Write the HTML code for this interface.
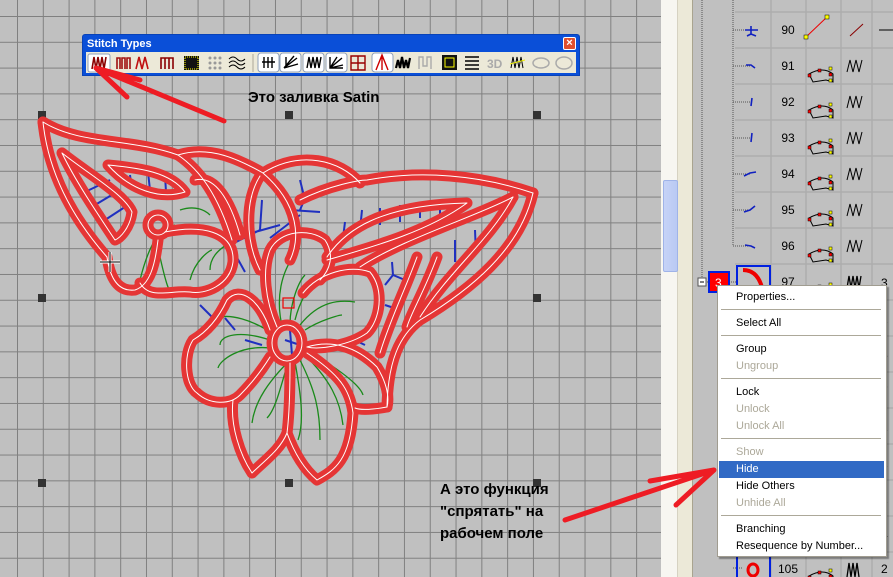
<!DOCTYPE html>
<html><head><meta charset="utf-8"><style>
body{margin:0;width:893px;height:577px;overflow:hidden;position:relative;font-family:"Liberation Sans",sans-serif;background:#c0c0c0}
#canvas{position:absolute;left:0;top:0;width:661px;height:577px;background-color:#c0c0c0;
background-image:linear-gradient(to right,#808080 0,#808080 1px,transparent 1px),linear-gradient(to bottom,#808080 0,#808080 1px,transparent 1px);
background-size:25.8px 25.8px;background-position:17px 16px}
#sb{position:absolute;left:661px;top:0;width:16px;height:577px;background:#f7f6f1}
#sb2{position:absolute;left:677px;top:0;width:16px;height:577px;background:#ece9d8;border-left:1px solid #d6d2c2;border-right:1px solid #a9a48f;box-sizing:border-box}
#thumb{position:absolute;left:663px;top:180px;width:13px;height:90px;background:linear-gradient(to right,#c6d3f7,#b9c9f3);border:1px solid #9fb3e8;border-radius:2px}
#panel{position:absolute;left:693px;top:0;width:200px;height:577px;background:#c0c0c0}
.num{position:absolute;font-size:12px;color:#000;width:34px;text-align:center}
#menu{position:absolute;left:717px;top:285px;width:168px;height:270px;background:#fff;border:1px solid #a09c90;box-shadow:2px 2px 1px rgba(0,0,0,.35);font-size:11px}
#menu div.i{position:absolute;left:1px;width:165px;height:17px;line-height:17px;padding-left:17px;box-sizing:border-box}
#menu .d{color:#aca899}
#menu .s{position:absolute;left:3px;width:160px;height:1px;background:#aca899}
#menu .h{background:#316ac5;color:#fff}
#tw{position:absolute;left:82px;top:34px;width:498px;height:42px;background:#0a4fd8;border:1px solid #0842b8;border-radius:3px 3px 0 0;box-sizing:border-box}
#tt{position:absolute;left:4px;top:3px;color:#fff;font-weight:bold;font-size:11px}
#tb{position:absolute;left:3px;top:17px;width:490px;height:21px;background:#ece9d8}
.note{position:absolute;font-weight:bold;font-size:15px;color:#000}
</style></head><body>
<div id="canvas"></div>

<svg width="661" height="577" style="position:absolute;left:0;top:0">
<g fill="#333"><rect x="38" y="111" width="8" height="8"/><rect x="285" y="111" width="8" height="8"/><rect x="533" y="111" width="8" height="8"/><rect x="38" y="294" width="8" height="8"/><rect x="533" y="294" width="8" height="8"/><rect x="38" y="479" width="8" height="8"/><rect x="285" y="479" width="8" height="8"/><rect x="533" y="479" width="8" height="8"/></g>
<g stroke="#2030c0" stroke-width="2" fill="none">
<path d="M85,192 L110,180 M95,205 L120,190 M105,220 L128,205"/>
<path d="M130,175 L132,190 M148,172 L150,190 M165,175 L166,192"/>
<path d="M230,245 L260,230 L262,200 M230,245 L245,272 M255,232 L280,225 M200,305 L215,320 M270,238 L300,215"/>
<path d="M300,210 L305,198 M290,210 L320,212 M305,200 L300,180"/>
<path d="M343,238 L345,222 M360,230 L362,210 M380,225 L380,208 M400,222 L400,205 M420,218 L420,205 M440,215 L440,205"/>
<path d="M385,285 L393,275 L412,283 M393,275 L392,262 M385,305 L400,310"/>
<path d="M455,240 L455,262 M475,230 L476,255 M285,340 L300,345 M290,330 L292,355 M245,340 L262,345 M225,318 L235,330 M350,338 L365,345"/>
</g>
<g stroke="#1a8a1a" stroke-width="1.3" fill="none">
<path d="M180,210 C195,205 205,210 210,215 M140,280 C150,240 160,230 175,225 M158,248 C165,280 170,300 175,292 M190,280 C195,260 210,250 212,250"/>
<path d="M235,240 C215,250 210,260 210,270"/>
<path d="M283,330 C275,300 280,270 300,248 M290,325 C290,300 300,280 305,275 M295,320 C300,300 310,285 320,275 M300,325 C320,300 340,300 355,302 M305,330 C320,320 340,315 342,315"/>
<path d="M275,335 C250,318 230,315 220,317 M270,340 C240,330 220,335 220,345 M270,348 C240,345 220,360 218,368"/>
<path d="M290,360 C270,380 255,400 252,423 M288,362 C280,390 275,410 267,418 M295,362 C300,390 305,420 298,440 M300,360 C315,390 320,410 320,440 M305,355 C330,380 340,400 343,425 M310,352 C340,370 360,385 363,395"/>
</g>
<g id="emb" fill="none" stroke-linejoin="round" stroke-linecap="round">
<path d="M43,122 C80,145 130,138 178,155 C200,170 218,195 232,240"/>
<path d="M178,155 C210,145 240,160 263,173 C300,150 340,160 360,183"/>
<path d="M195,180 C215,175 230,200 240,235"/>
<path d="M43,122 C48,170 70,215 107,257 C110,278 118,292 135,290 C150,285 155,265 158,240"/>
<path d="M62,153 C90,175 125,195 132,212 C130,228 120,238 115,240 C95,210 75,180 62,153Z"/>
<path d="M108,165 C140,168 170,172 185,192 C160,200 130,190 108,165Z"/>
<circle cx="158" cy="225" r="10"/>
<path d="M165,232 C200,225 235,230 233,262 C230,285 205,295 190,292 C170,290 150,300 140,283"/>
<path d="M260,176 C245,200 245,240 260,270"/>
<path d="M263,173 C300,205 300,240 290,260"/>
<path d="M300,200 C330,185 360,180 367,180 C420,170 480,175 533,193"/>
<path d="M533,193 C520,250 470,290 420,320 C400,335 388,360 387,407"/>
<path d="M513,197 C480,215 400,240 360,267"/>
<path d="M513,197 C490,240 450,270 420,317"/>
<path d="M327,257 C345,230 380,205 467,203 C430,230 380,245 327,260"/>
<path d="M417,257 C405,290 390,320 380,353 M437,257 C425,290 410,315 407,327"/>
<path d="M303,293 C320,272 350,265 370,272 C385,290 380,320 367,333 C350,345 320,350 307,347"/>
<path d="M277,327 C265,300 262,270 270,250 C280,230 310,228 325,240 C335,255 330,270 320,280"/>
<path d="M270,330 C260,300 240,285 227,300 C220,315 210,330 193,340 C183,355 185,385 197,393 C210,405 230,405 240,395 C255,380 265,365 270,357"/>
<path d="M233,400 C230,425 240,455 252,473 C265,460 280,450 287,433 C290,410 290,380 290,363"/>
<path d="M287,433 C295,455 305,470 317,480 C335,470 350,460 353,413 C350,390 340,375 307,353"/>
<path d="M307,347 C330,340 355,345 377,367 C385,380 390,395 387,407 C370,410 360,410 355,408"/>
<ellipse cx="287" cy="343" rx="15" ry="18"/>
</g>
<use href="#emb" stroke="#e53535" stroke-width="11"/>
<g stroke="#fff" stroke-width="1" fill="none" stroke-linejoin="round"><use href="#emb"/></g>
<rect x="283" y="298" width="11" height="10" fill="none" stroke="#e00" stroke-width="1.2"/>
<path d="M110,252 V272 M100,262 H120" stroke="#fff" stroke-width="3"/>
<path d="M110,252 V272 M100,262 H120" stroke="#000" stroke-width="1"/>
</svg>

<div class="note" style="left:248px;top:89px">Это заливка Satin</div>
<div class="note" style="left:440px;top:479px;line-height:22px">А это функция<br>"спрятать" на<br>рабочем поле</div>

<div id="tw"><div id="tt">Stitch Types</div>
<div style="position:absolute;left:480px;top:2px;width:13px;height:13px;background:#e0502f;border:1px solid #fff;border-radius:2px;box-sizing:border-box;color:#fff;font-size:11px;line-height:11px;text-align:center;font-weight:bold">×</div>
<div id="tb">
<svg width="490" height="21">
<rect x="2" y="2" width="22" height="18" rx="2" fill="#fff" stroke="#8fa0b8"/>
<g stroke="#8b0000" stroke-width="1.6" fill="none">
<path d="M6,17 L8,5 L10,17 L12,5 L14,17 L16,5 L18,17 L20,5"/>
<path d="M31,17 V6 H34 V17 M36,17 V6 H39 V17 M41,17 V6 H44 V17" stroke="#a01010"/>
<path d="M50,17 L53,5 L56,17 L59,5 L62,17" stroke="#c01010"/>
<path d="M75,17 V6 H87 V17 M79,6 V17 M83,6 V17"/>
</g>
<rect x="98" y="4" width="15" height="14" fill="#111"/><rect x="99" y="5" width="13" height="12" fill="none" stroke="#ff0" stroke-dasharray="1 1"/>
<g fill="#999"><circle cx="124" cy="6" r="1.5"/><circle cx="129" cy="6" r="1.5"/><circle cx="134" cy="6" r="1.5"/><circle cx="124" cy="11" r="1.5"/><circle cx="129" cy="11" r="1.5"/><circle cx="134" cy="11" r="1.5"/><circle cx="124" cy="16" r="1.5"/><circle cx="129" cy="16" r="1.5"/><circle cx="134" cy="16" r="1.5"/></g>
<path d="M143,7 Q147,3 151,7 T159,7 M143,11 Q147,7 151,11 T159,11 M143,15 Q147,11 151,15 T159,15" stroke="#000" fill="none"/>
<path d="M167,2 V20" stroke="#aca899"/>
<g fill="#fff" stroke="#8fa0b8"><rect x="172" y="1" width="21" height="19" rx="3"/><rect x="194" y="1" width="21" height="19" rx="3"/><rect x="217" y="1" width="21" height="19" rx="3"/><rect x="240" y="1" width="21" height="19" rx="3"/><rect x="286" y="1" width="21" height="19" rx="3"/></g>
<g stroke="#000" stroke-width="1.4" fill="none">
<path d="M176,10 H189 M178,5 V16 M182,5 V16 M186,5 V16"/>
<path d="M198,16 L211,6 M198,16 L208,4 M198,16 L212,12 M200,5 L200,16"/>
<path d="M221,16 L223,5 L225,16 L227,5 L229,16 L231,5 L233,16 L235,5"/>
<path d="M244,16 L256,6 M244,16 L251,5 M244,16 L257,13 M244,5 V16 H257"/>
<path d="M265,4 H279 V18 H265 Z M265,11 H279 M272,4 V18" stroke="#900"/>
<path d="M290,18 L296,3 L302,18 M296,3 V18" stroke="#c00"/>
<path d="M310,16 L312,8 L314,16 L316,5 L318,16 L320,8 L322,16 L324,6" stroke-width="2.2"/>
<path d="M333,17 V5 H337 V14 H341 V5 H345 V17" stroke="#aaa"/>
</g>
<rect x="356" y="3" width="15" height="15" fill="#111"/><rect x="359" y="6" width="9" height="9" fill="none" stroke="#ff0"/>
<path d="M379,5 H393 M379,9 H393 M379,13 H393 M379,17 H393" stroke="#000" stroke-width="1.5"/>
<text x="401" y="16" font-size="12" font-weight="bold" fill="#aaa" font-family="Liberation Sans">3D</text>
<path d="M425,16 L427,5 L429,16 L431,5 L433,16 L435,5 L437,16" stroke="#000" fill="none"/><path d="M424,12 L439,8" stroke="#ee0"/>
<ellipse cx="455" cy="11" rx="8" ry="5" fill="none" stroke="#aaa" stroke-width="1.5"/>
<ellipse cx="478" cy="11" rx="8" ry="6" fill="none" stroke="#aaa" stroke-width="1.5"/>
</svg>
</div></div>

<div id="sb"></div><div id="sb2"></div><div id="thumb"></div>

<div id="panel">
<svg width="200" height="577" style="position:absolute;left:0;top:0">
<defs>
<g id="ic"><path d="M116,38 Q130,30 140,38 V46 L133,44 L120,46 Z" fill="none" stroke="#000"/><rect x="115" y="38" width="3" height="3" fill="#f00" stroke="#000" stroke-width=".5"/><rect x="125" y="33" width="3" height="3" fill="#f00" stroke="#000" stroke-width=".5"/><rect x="136" y="31" width="3" height="3" fill="#ff0" stroke="#000" stroke-width=".5"/><rect x="136" y="37" width="3" height="3" fill="#f00" stroke="#000" stroke-width=".5"/><rect x="136" y="43" width="3" height="3" fill="#ff0" stroke="#000" stroke-width=".5"/></g>
</defs>
<g stroke="#adadad" stroke-width="1.5">
<path d="M78,0 V577 M113,0 V577 M148,0 V577 M179,0 V577"/>
<path d="M42,12 H200 M42,48 H200 M42,84 H200 M42,120 H200 M42,156 H200 M42,192 H200 M42,228 H200 M42,264 H200 M42,300 H200 M42,336 H200 M42,372 H200 M42,408 H200 M42,444 H200 M42,480 H200 M42,516 H200 M42,552 H200"/>
</g>
<g stroke="#555" stroke-dasharray="1 1" fill="none"><path d="M9,0 V282 M40,0 V246 M40,30 H57 M40,66 H57 M40,102 H57 M40,138 H57 M40,174 H57 M40,210 H57 M40,246 H57 M12,282 H45 M40,568 H50"/></g>
<g stroke="#1020c0" stroke-width="1.6" fill="none">
<path d="M52,30 H65 M58,26 V34 L54,36 M58,34 L63,36"/><path d="M53,65 L58,65 L62,68"/><path d="M59,98 L58,106"/><path d="M59,133 L58,142"/><path d="M51,176 L57,173 L63,172"/><path d="M51,212 L57,210 L62,206"/><path d="M52,245 L58,246 L62,248"/>
</g>
<rect x="5" y="278" width="8" height="8" fill="#fff" stroke="#555"/><path d="M7,282 H11" stroke="#000"/>
<rect x="16" y="272" width="20" height="20" fill="#f00" stroke="#0020e0" stroke-width="2"/><text x="22" y="287" font-size="12" fill="#fff" font-family="Liberation Sans">3</text>
<rect x="44" y="266" width="33" height="30" fill="none" stroke="#0020e0" stroke-width="2"/><path d="M50,270 Q66,270 70,292" stroke="#e00" stroke-width="4" fill="none"/>
<path d="M44,556 V577 M77,556 V577" stroke="#0020e0" stroke-width="2"/><ellipse cx="60" cy="570" rx="5" ry="6" fill="none" stroke="#e00" stroke-width="3"/>
<use href="#ic" y="36"/><use href="#ic" y="72"/><use href="#ic" y="108"/><use href="#ic" y="144"/><use href="#ic" y="180"/><use href="#ic" y="216"/><use href="#ic" y="252"/><use href="#ic" y="538"/>
<path d="M113,37 L134,17" stroke="#e00"/><rect x="111" y="35" width="4" height="4" fill="#ff0" stroke="#000" stroke-width=".5"/><rect x="132" y="15" width="4" height="4" fill="#ff0" stroke="#000" stroke-width=".5"/>
<path d="M157,36 L170,24" stroke="#800"/>
<g id="zz" stroke="#000" fill="none"><path d="M154,72 L157,60 L160,72 L163,60 L166,72 L169,60"/></g>
<use href="#zz" y="36"/><use href="#zz" y="72"/><use href="#zz" y="108"/><use href="#zz" y="144"/><use href="#zz" y="180"/>
<path d="M154,288 L156,276 L158,288 L160,276 L162,288 L164,276 L166,288 L168,276" stroke="#000" fill="none" stroke-width="1.3"/>
<path d="M154,577 L156,563 L158,577 L160,563 L162,577 L164,563 L166,577" stroke="#000" fill="none" stroke-width="1.3"/>
<path d="M186,30 H200" stroke="#000"/>
<g font-size="12" font-family="Liberation Sans" fill="#000"><text x="188" y="287">3</text><text x="188" y="323">2</text><text x="188" y="359">5</text><text x="188" y="395">7</text><text x="188" y="431">1</text><text x="188" y="467">2</text><text x="188" y="503">2</text><text x="188" y="539">4</text><text x="188" y="573">2</text></g>
</svg>
<div class="num" style="left:78px;top:23px">90</div><div class="num" style="left:78px;top:59px">91</div><div class="num" style="left:78px;top:95px">92</div><div class="num" style="left:78px;top:131px">93</div><div class="num" style="left:78px;top:167px">94</div><div class="num" style="left:78px;top:203px">95</div><div class="num" style="left:78px;top:239px">96</div><div class="num" style="left:78px;top:275px">97</div><div class="num" style="left:78px;top:562px">105</div>
</div>

<div id="menu">
<div class="i" style="top:3px">Properties...</div><div class="s" style="top:23px"></div>
<div class="i" style="top:29px">Select All</div><div class="s" style="top:49px"></div>
<div class="i" style="top:55px">Group</div><div class="i d" style="top:72px">Ungroup</div><div class="s" style="top:92px"></div>
<div class="i" style="top:98px">Lock</div><div class="i d" style="top:115px">Unlock</div><div class="i d" style="top:132px">Unlock All</div><div class="s" style="top:152px"></div>
<div class="i d" style="top:158px">Show</div><div class="i h" style="top:175px">Hide</div><div class="i" style="top:192px">Hide Others</div><div class="i d" style="top:209px">Unhide All</div><div class="s" style="top:229px"></div>
<div class="i" style="top:235px">Branching</div><div class="i" style="top:252px">Resequence by Number...</div>
</div>

<svg width="893" height="577" style="position:absolute;left:0;top:0;pointer-events:none">
<g stroke="#ee1c24" stroke-width="5" stroke-linecap="round" fill="none">
<path d="M96,68 L224,121 M96,68 L140,80 M96,68 L127,97"/>
<path d="M565,520 L714,470 M714,470 L650,481 M714,470 L676,505"/>
</g>
</svg>
</body></html>
